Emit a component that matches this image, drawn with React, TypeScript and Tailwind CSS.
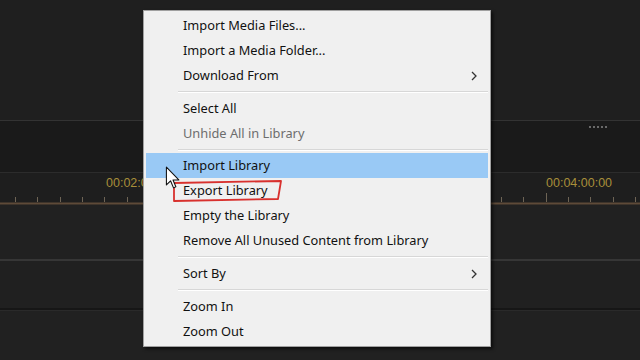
import React from "react";

type Item = { label: string; disabled?: boolean; sub?: boolean; active?: boolean };

const groups: Item[][] = [
  [
    { label: "Import Media Files..." },
    { label: "Import a Media Folder..." },
    { label: "Download From", sub: true },
  ],
  [{ label: "Select All" }, { label: "Unhide All in Library", disabled: true }],
  [
    { label: "Import Library", active: true },
    { label: "Export Library" },
    { label: "Empty the Library" },
    { label: "Remove All Unused Content from Library" },
  ],
  [{ label: "Sort By", sub: true }],
  [{ label: "Zoom In" }, { label: "Zoom Out" }],
];

function Ticks({ xs, tall }: { xs: number[]; tall: number[] }) {
  return (
    <svg className="absolute left-0 top-0" width={640} height={32}>
      {xs.map((x) => (
        <line
          key={x}
          x1={x + 0.5}
          x2={x + 0.5}
          y1={tall.includes(x) ? 20 : 24}
          y2={29}
          stroke="#6e6455"
          strokeWidth={1}
        />
      ))}
      <line x1={0} x2={640} y1={30.5} y2={30.5} stroke="#5e4a38" strokeWidth={2} />
    </svg>
  );
}

export default function App() {
  const xs: number[] = [];
  for (let i = 0; i < 6; i++) xs.push(Math.round(15 + i * 22.3));
  for (let i = 0; i < 7; i++) xs.push(Math.round(501 + i * 22.3));
  return (
    <div
      className="relative w-[640px] h-[360px] overflow-hidden bg-[#1f1f1f]"
      style={{ fontFamily: '"Noto Sans", "Open Sans", sans-serif' }}
    >
      {/* background panels */}
      <div className="flex flex-col h-full">
        <div className="h-[121px] bg-[#1f1f1f] border-b border-[#333333]" />
        <div className="relative h-[52px] bg-[#1a1a1a] border-b border-[#2c2c2c]">
          <div className="absolute left-[589px] top-[5px] flex gap-[2px]">
            <span className="w-[2px] h-[2px] bg-[#6a6a6a]" />
            <span className="w-[2px] h-[2px] bg-[#6a6a6a]" />
            <span className="w-[2px] h-[2px] bg-[#6a6a6a]" />
            <span className="w-[2px] h-[2px] bg-[#6a6a6a]" />
            <span className="w-[2px] h-[2px] bg-[#6a6a6a]" />
          </div>
        </div>
        <div className="relative h-[32px] bg-[#1e1e1e]">
          <span className="absolute left-[106px] top-[1px] text-[12.5px] text-[#a88f3a]" style={{ fontFamily: '"Liberation Sans", sans-serif' }}>
            00:02:00:00
          </span>
          <span className="absolute left-[546px] top-[1px] text-[12.5px] text-[#a88f3a]" style={{ fontFamily: '"Liberation Sans", sans-serif' }}>
            00:04:00:00
          </span>
          <Ticks xs={xs} tall={[105, 546]} />
        </div>
        <div className="h-[56px] bg-[#212121] border-b-2 border-[#363636]" />
        <div className="h-[49px] bg-[#202020] border-b-2 border-[#161616]" />
        <div className="flex-1 bg-[#212121] border-t border-[#2a2a2a]" />
      </div>

      {/* context menu */}
      <div className="absolute left-[143px] top-[10px] w-[348px] bg-[#f0f0f0] border border-[#a0a0a0] shadow-[2px_2px_3px_rgba(0,0,0,0.6)] py-[2px] px-[2px]">
        {groups.map((g, gi) => (
          <div key={gi}>
            {gi > 0 && (
              <div className={`${gi === 2 ? "h-[7px]" : "h-[8px]"} flex items-center pl-[32px]`}>
                <div className="w-full h-[2px] border-t border-[#d7d7d7] border-b border-b-white" />
              </div>
            )}
            {g.map((it) => (
              <div
                key={it.label}
                className={`h-[25px] flex items-center justify-between pl-[37px] pr-[11px] text-[12.8px] ${
                  it.active ? "bg-[#99c9f5]" : ""
                } ${it.disabled ? "text-[#6d6d6d]" : "text-[#111111]"}`}
              >
                <span className="mt-[1px]">{it.label}</span>
                {it.sub && (
                  <svg width="6" height="10" viewBox="0 0 6 10" className="mt-[1px]">
                    <path d="M1 1 L5 5 L1 9" fill="none" stroke="#333" strokeWidth="1.3" />
                  </svg>
                )}
              </div>
            ))}
          </div>
        ))}
      </div>

      {/* red annotation */}
      <svg className="absolute left-0 top-0 pointer-events-none" width={640} height={360}>
        <path
          d="M174 183 L281 181 L278 199 L174 201 Z"
          fill="none"
          stroke="#d8312e"
          strokeWidth={1.8}
          strokeLinejoin="round"
        />
      </svg>

      {/* cursor */}
      <svg className="absolute left-[165px] top-[166px]" width={17} height={26} viewBox="0 0 14 22">
        <path
          d="M1 1 L1 16 L4.5 12.5 L7 18.5 L9 17.6 L6.6 11.8 L11.5 11.8 Z"
          fill="#ffffff"
          stroke="#111"
          strokeWidth={0.9}
          strokeLinejoin="round"
        />
      </svg>
    </div>
  );
}
